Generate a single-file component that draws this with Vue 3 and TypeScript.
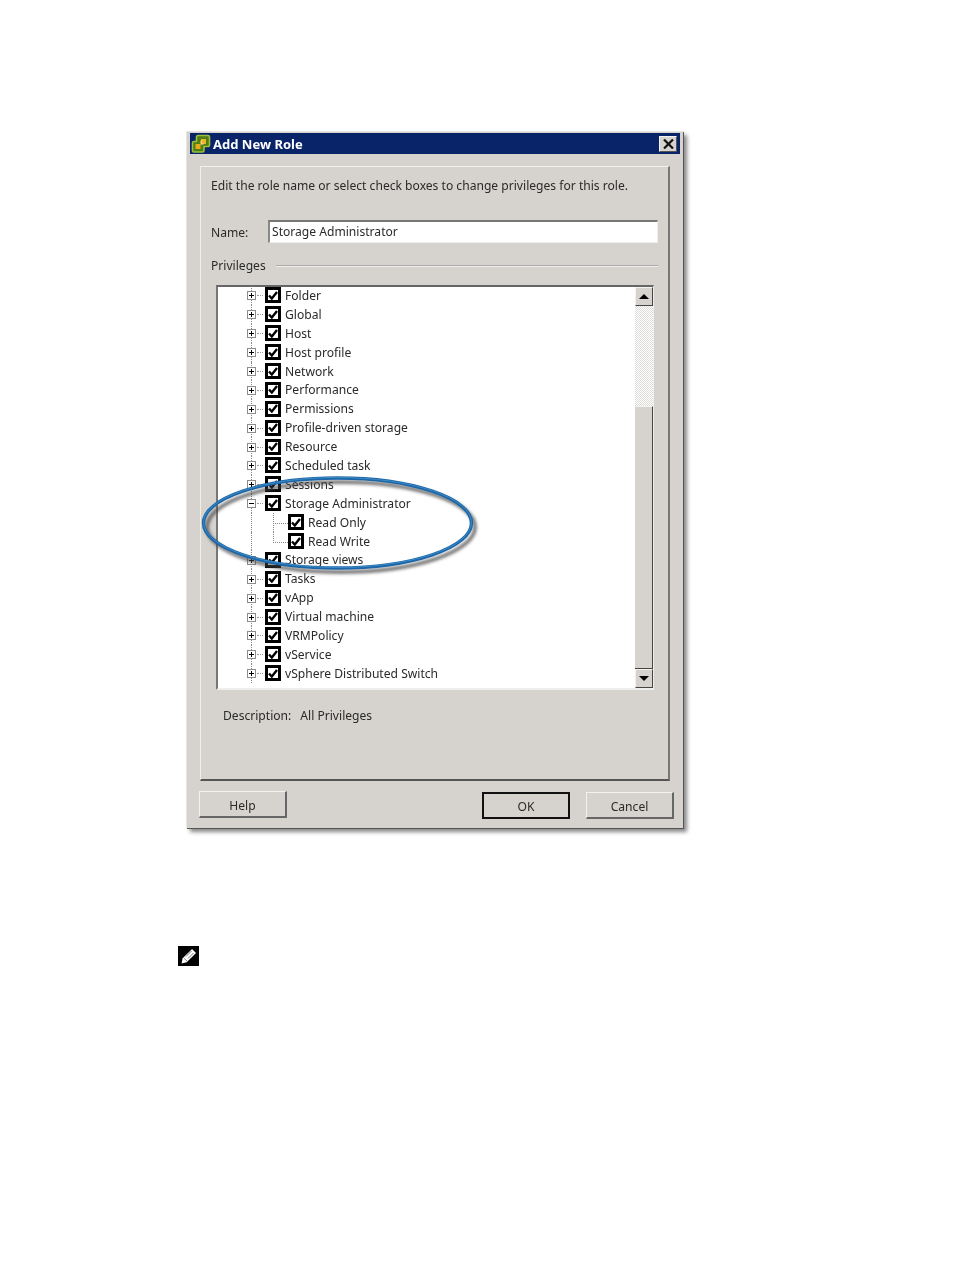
<script setup lang="ts">
interface TreeRow {
  label: string;
  child?: boolean;
  open?: boolean;
  last?: boolean;
}

const rows: TreeRow[] = [
  { label: 'Folder' },
  { label: 'Global' },
  { label: 'Host' },
  { label: 'Host profile' },
  { label: 'Network' },
  { label: 'Performance' },
  { label: 'Permissions' },
  { label: 'Profile-driven storage' },
  { label: 'Resource' },
  { label: 'Scheduled task' },
  { label: 'Sessions' },
  { label: 'Storage Administrator', open: true },
  { label: 'Read Only', child: true },
  { label: 'Read Write', child: true, last: true },
  { label: 'Storage views' },
  { label: 'Tasks' },
  { label: 'vApp' },
  { label: 'Virtual machine' },
  { label: 'VRMPolicy' },
  { label: 'vService' },
  { label: 'vSphere Distributed Switch' },
];
</script>

<template>
  <div class="page">
    <div class="window">
      <div class="titlebar">
        <svg class="logo" width="20" height="20" viewBox="0 0 20 20">
          <path d="M7 1.500h10a1.500 1.500 0 0 1 1.500 1.500v8a1.500 1.500 0 0 1-1.500 1.500h-4v4a1.500 1.500 0 0 1-1.500 1.500H3A1.500 1.500 0 0 1 1.500 17V9A1.500 1.500 0 0 1 3 7.500h2.500V3A1.500 1.500 0 0 1 7 1.500z" fill="#4f7d16" stroke="#9dbf3a" stroke-width="1.600" />
          <rect x="4.500" y="10" width="5" height="5" fill="#e8a91e" />
          <rect x="10" y="5" width="5" height="5" fill="#f0b428" />
          <path d="M9.500 10h3M10 9.500v-3" stroke="#fbe6a0" stroke-width="1" />
        </svg>
        <span class="title">Add New Role</span>
        <button class="close" type="button">
          <svg width="11" height="10" viewBox="0 0 11 10">
            <path d="M1 0.500l9 9M10 0.500l-9 9" stroke="#111" stroke-width="2.200" />
          </svg>
        </button>
      </div>

      <div class="panel">
        <p class="intro">Edit the role name or select check boxes to change privileges for this role.</p>

        <div class="name-row">
          <label class="name-label">Name:</label>
          <div class="name-input">Storage Administrator</div>
        </div>

        <div class="priv-row">
          <span>Privileges</span>
          <span class="rule"></span>
        </div>

        <div class="list">
          <div class="tree">
            <div v-for="row in rows" :key="row.label" class="row" :class="{ child: row.child }">
              <span class="trunk"></span>
              <template v-if="row.child">
                <span v-if="!row.last" class="elbow-run"></span>
                <span class="elbow"></span>
              </template>
              <template v-else>
                <span class="expander">
                  <svg width="9" height="9" viewBox="0 0 9 9">
                    <rect x="0.500" y="0.500" width="8" height="8" fill="#fff" stroke="#8c8c8c" />
                    <path d="M2 4.500h5" stroke="#000" />
                    <path v-if="!row.open" d="M4.500 2v5" stroke="#000" />
                  </svg>
                </span>
                <span class="stub"></span>
              </template>
              <span class="check">
                <svg width="10" height="9" viewBox="0 0 10 9">
                  <path d="M1 4.500l2.800 3L9 1" fill="none" stroke="#000" stroke-width="2.400" />
                </svg>
              </span>
              <span class="label">{{ row.label }}</span>
            </div>
          </div>

          <div class="scrollbar">
            <div class="sb-btn">
              <svg width="10" height="5" viewBox="0 0 10 5"><path d="M5 0l5 5H0z" fill="#000" /></svg>
            </div>
            <div class="sb-track"></div>
            <div class="sb-thumb"></div>
            <div class="sb-btn">
              <svg width="10" height="5" viewBox="0 0 10 5"><path d="M0 0h10L5 5z" fill="#000" /></svg>
            </div>
          </div>
        </div>

        <div class="description">
          <span>Description:</span>
          <span>All Privileges</span>
        </div>
      </div>

      <div class="buttons">
        <button class="btn help" type="button">Help</button>
        <span class="spacer"></span>
        <button class="btn default" type="button">OK</button>
        <button class="btn" type="button">Cancel</button>
      </div>

      <svg class="ring" width="296" height="120" viewBox="0 0 296 120">
        <defs>
          <filter id="soft" x="-10%" y="-20%" width="120%" height="140%">
            <feGaussianBlur stdDeviation="1.500" />
          </filter>
        </defs>
        <ellipse cx="144" cy="57" rx="134" ry="45" fill="none" stroke="#444" stroke-opacity="0.7" stroke-width="4" transform="translate(2 4)" filter="url(#soft)" />
        <ellipse cx="142.500" cy="57" rx="134" ry="45" fill="none" stroke="#1b66a8" stroke-width="3.400" />
        <ellipse cx="142.500" cy="56.500" rx="134" ry="45" fill="none" stroke="#4b9ad2" stroke-opacity="0.700" stroke-width="1" />
      </svg>
    </div>

    <svg class="note" width="21" height="20" viewBox="0 0 21 20">
      <rect width="21" height="20" fill="#000" />
      <path d="M3.500 17.500l1.200-5.300L14 3l4 4-9.300 9.300z" fill="#fff" />
      <path d="M6 12.200l3 3M8 10.500l5.500-5.500M10 12.500L15.500 7" stroke="#777" stroke-width="1" />
    </svg>
  </div>
</template>

<style scoped>
.page {
  width: 954px;
  height: 1268px;
  padding: 131px 0 0 186px;
  box-sizing: border-box;
  background: #fff;
  font-family: "Noto Sans", "DejaVu Sans", sans-serif;
  font-size: 12.100px;
  color: #2a2a2a;
  overflow: hidden;
}

.window {
  position: relative;
  width: 497px;
  height: 697px;
  box-sizing: border-box;
  padding: 1px 3px 0 3px;
  background: #d6d3ce;
  border-top: 1px solid #e8e6e2;
  border-left: 1px solid #e8e6e2;
  box-shadow: 1px 1px 0 #555, 4px 4px 4px #888;
  filter: blur(0.45px);
}

.titlebar {
  display: flex;
  align-items: center;
  height: 21px;
  background: #0a246a;
  color: #fff;
  font-weight: 700;
  font-size: 13px;
}

.logo {
  margin-left: 1px;
  margin-right: 2px;
}

.title {
  flex: 1;
}

.close {
  width: 18px;
  height: 16px;
  margin-right: 3px;
  padding: 0;
  display: flex;
  align-items: center;
  justify-content: center;
  background: #d6d3ce;
  border: 1px solid #f4f2ee;
  border-right-color: #555;
  border-bottom-color: #555;
}

.panel {
  height: 615px;
  margin: 12px 10px 0 10px;
  box-sizing: border-box;
  padding: 10px 10px 0 10px;
  border: 1px solid #f2f0ec;
  border-right: 2px solid #777;
  border-bottom: 2px solid #555;
  border-left-color: #f0eeea;
}

.intro {
  margin: 0;
  line-height: 18px;
}

.name-row {
  display: flex;
  align-items: center;
  margin-top: 25px;
}

.name-label {
  width: 57px;
  padding-top: 2px;
}

.name-input {
  width: 390px;
  height: 23px;
  box-sizing: border-box;
  padding-left: 2px;
  background: #fff;
  border-top: 2px solid #777;
  border-left: 2px solid #888;
  border-right: 1px solid #eee;
  border-bottom: 1px solid #eee;
  line-height: 20px;
}

.priv-row {
  display: flex;
  align-items: center;
  gap: 10px;
  margin-top: 14px;
  line-height: 18px;
}

.rule {
  flex: 1;
  height: 2px;
  background: linear-gradient(#aaa 50%, #f2f0ec 50%);
}

.list {
  display: flex;
  width: 438px;
  height: 405px;
  margin: 10px 0 0 5px;
  box-sizing: border-box;
  background: #fff;
  border-top: 2px solid #666;
  border-left: 2px solid #777;
  border-right: 1px solid #eee;
  border-bottom: 2px solid #eee;
}

.tree {
  flex: 1;
  margin-top: -1px;
  overflow: hidden;
  display: grid;
  grid-auto-rows: 18.900px;
  align-content: start;
}

.row {
  position: relative;
  display: flex;
  align-items: center;
  padding-left: 29px;
}

.row.child {
  padding-left: 70px;
}

.trunk {
  position: absolute;
  left: 33px;
  top: 0;
  bottom: 0;
  border-left: 1px dotted #888;
}

.expander {
  position: relative;
  display: flex;
  width: 9px;
  height: 9px;
  margin-top: 1px;
}

.stub {
  width: 6px;
  margin: 1px 2px 0 1px;
  border-top: 1px dotted #999;
}

.elbow {
  position: absolute;
  left: 55px;
  top: 0;
  width: 14px;
  height: 10px;
  border-left: 1px dotted #888;
  border-bottom: 1px dotted #888;
}

.elbow-run {
  position: absolute;
  left: 55px;
  top: 10px;
  bottom: 0;
  border-left: 1px dotted #888;
}

.check {
  position: relative;
  flex: none;
  display: flex;
  align-items: center;
  justify-content: center;
  width: 16px;
  height: 16px;
  box-sizing: border-box;
  background: #fff;
  border: 3px solid #000;
}

.label {
  margin-left: 4px;
  white-space: nowrap;
}

.scrollbar {
  width: 18px;
  display: flex;
  flex-direction: column;
}

.sb-btn {
  height: 19px;
  flex: none;
  display: flex;
  align-items: center;
  justify-content: center;
  box-sizing: border-box;
  background: #d6d3ce;
  border: 1px solid #f4f2ee;
  border-right-color: #444;
  border-bottom-color: #444;
}

.sb-track {
  height: 100px;
  flex: none;
  background: repeating-conic-gradient(#d6d3ce 0 25%, #fff 0 50%) 0 0 / 2px 2px;
  opacity: 0.8;
}

.sb-thumb {
  flex: 1;
  box-sizing: border-box;
  background: #d6d3ce;
  border-top: 1px solid #f4f2ee;
  border-right: 1px solid #444;
  border-bottom: 1px solid #444;
}

.description {
  display: flex;
  gap: 9px;
  margin: 17px 0 0 12px;
  line-height: 18px;
}

.buttons {
  display: flex;
  gap: 16px;
  margin: 11px 6px 0 9px;
}

.spacer {
  flex: 1;
}

.btn {
  width: 88px;
  height: 27px;
  padding: 2px 0 0;
  font: inherit;
  color: #2a2a2a;
  background: #d6d3ce;
  border: 1px solid #f4f2ee;
  border-right: 2px solid #666;
  border-bottom: 2px solid #666;
}

.btn.help {
  margin-top: -1px;
}

.btn.default {
  border: 2px solid #111;
}

.ring {
  position: absolute;
  left: 8px;
  top: 334px;
  pointer-events: none;
}

.note {
  display: block;
  margin: 118px 0 0 -8px;
}
</style>
<style>
html, body {
  margin: 0;
  background: #fff;
}
</style>
